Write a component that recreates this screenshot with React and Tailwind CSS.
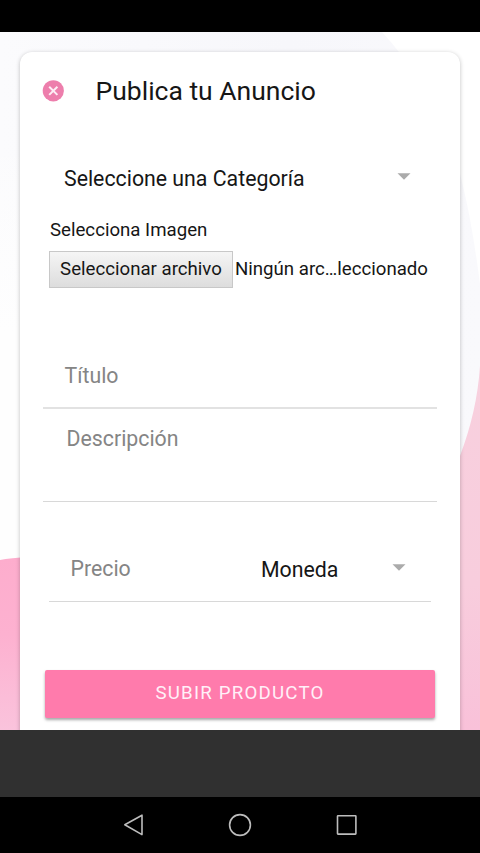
import React from "react";

function Caret({ className }) {
  return (
    <svg viewBox="0 0 14 7" className={`w-[14px] h-[7px] ${className}`}>
      <path d="M0.5 0.2h13L7 6.8z" fill="#ababab" />
    </svg>
  );
}

function Background() {
  return (
    <svg
      viewBox="0 0 480 698"
      className="absolute inset-0 w-full h-full"
      preserveAspectRatio="none"
    >
      <defs>
        <linearGradient id="leftPink" x1="0" y1="0" x2="0" y2="1">
          <stop offset="0" stopColor="#fdadcd" />
          <stop offset="0.45" stopColor="#fdb1d0" />
          <stop offset="1" stopColor="#fac3dc" />
        </linearGradient>
        <linearGradient id="rightPink" x1="0" y1="0" x2="0" y2="1">
          <stop offset="0" stopColor="#f8d0de" />
          <stop offset="0.6" stopColor="#f8cddd" />
          <stop offset="1" stopColor="#f9c1d9" />
        </linearGradient>
        <linearGradient id="grayBlob" x1="0" y1="0" x2="1" y2="0">
          <stop offset="0" stopColor="#fbfbfd" />
          <stop offset="0.6" stopColor="#f7f7fb" />
          <stop offset="1" stopColor="#f9f9fc" />
        </linearGradient>
        <linearGradient id="leftFade" x1="0" y1="0" x2="0" y2="1">
          <stop offset="0" stopColor="#fefefe" stopOpacity="0" />
          <stop offset="1" stopColor="#fefefe" />
        </linearGradient>
      </defs>
      <path d="M0 0H382C410 30 450 90 462 150Q472 190 480 252V440H0z" fill="url(#grayBlob)" />
      <path d="M0 100H240V300H0z" fill="url(#leftFade)" />
      <path d="M0 300H240V698H0z" fill="#fefefe" />
      <path d="M480 334C478 365 471 395 460 424L440 460V698H480z" fill="url(#rightPink)" />
      <path d="M0 528Q10 526 30 525V698H0z" fill="url(#leftPink)" />
    </svg>
  );
}

function CloseButton() {
  return (
    <button className="shrink-0">
      <svg viewBox="0 0 22 22" className="block w-[22px] h-[22px]">
        <circle cx="11.3" cy="10.8" r="10.6" fill="#ed7eac" />
        <path
          d="M7.2 6.7l8.2 8.2M15.4 6.7l-8.2 8.2"
          stroke="#fdeef5"
          strokeWidth="2"
        />
      </svg>
    </button>
  );
}

function PublishForm() {
  return (
    <div className="relative mx-5 mt-5 h-[720px] rounded-t-xl bg-white shadow-[0_1px_4px_rgba(0,0,0,0.25)] text-[#161616]">
      <header className="flex items-center h-[78px] pl-[22px]">
        <CloseButton />
        <h1 className="ml-[31.5px] text-[26.5px] leading-8">Publica tu Anuncio</h1>
      </header>

      <div className="flex items-center justify-between h-12 mt-6 pl-11 pr-[49px]">
        <span className="pt-px text-[21.3px]">Seleccione una Categoría</span>
        <Caret className="-mt-1" />
      </div>

      <div className="pl-[29px] mt-4 text-[18.65px] leading-6">
        <p className="pl-px">Selecciona Imagen</p>
        <div className="flex items-center mt-[9px] whitespace-nowrap">
          <button className="w-[184px] h-[37px] pb-px border border-[#c8c8c8] bg-linear-to-b from-[#f5f5f5] to-[#dddddd]">
            Seleccionar archivo
          </button>
          <span className="ml-0.5 pb-px">Ningún arc…leccionado</span>
        </div>
      </div>

      <div className="mx-[23px] mt-[55px] h-[66px] pl-[21.5px] pt-[17px] border-b-2 border-[#e2e2e2] text-[21.3px] leading-8 text-[#858585]">
        Título
      </div>
      <div className="mx-[23px] h-[93px] pl-[23.5px] pt-[14px] border-b border-[#d8d8d8] text-[21.3px] leading-8 text-[#858585]">
        Descripción
      </div>

      <div className="flex items-center mx-[29px] mt-[34px] h-[66px] pl-[21.5px] pr-[25.5px] border-b border-[#d8d8d8] text-[21.3px]">
        <span className="w-[190.5px] pt-px text-[#858585]">Precio</span>
        <span className="flex-1 pt-[3px]">Moneda</span>
        <Caret className="-mt-[3px]" />
      </div>

      <button className="block ml-[25px] mt-[68px] w-[390px] h-12 pb-px rounded-[2px] bg-[#ff7bac] text-[#fff0f8] text-[18.7px] tracking-[1.2px] shadow-[0_2px_3px_rgba(0,0,0,0.35)]">
        SUBIR PRODUCTO
      </button>
    </div>
  );
}

function NavBar() {
  return (
    <nav className="flex items-center justify-center h-14 bg-black">
      <svg
        viewBox="0 0 240 24"
        className="w-60 h-6"
        fill="none"
        stroke="#bdbdbd"
        strokeWidth="1.6"
        strokeLinejoin="round"
      >
        <path d="M4.8 11.8L22 2.2V21.6z" />
        <circle cx="120" cy="12" r="10.4" />
        <rect x="217.5" y="2.7" width="18.4" height="18.4" rx="0.5" />
      </svg>
    </nav>
  );
}

function App() {
  return (
    <div className="flex flex-col w-[480px] h-[853px] overflow-hidden bg-black font-[Roboto,sans-serif]">
      <div className="h-8 shrink-0 bg-black" />
      <main className="relative h-[698px] shrink-0 overflow-hidden bg-white">
        <Background />
        <PublishForm />
      </main>
      <div className="h-[67px] shrink-0 bg-[#303030]" />
      <NavBar />
    </div>
  );
}

export default App;
